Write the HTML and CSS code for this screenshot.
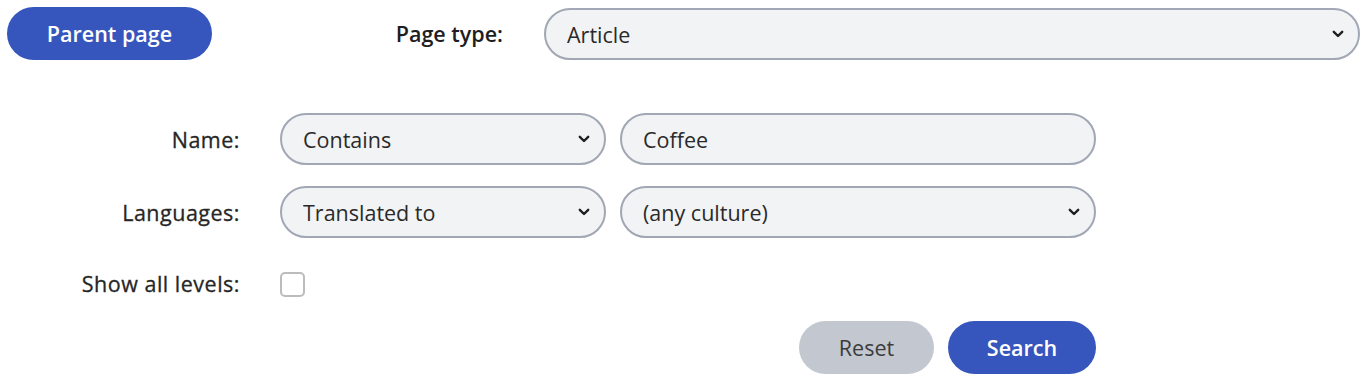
FILE: index.html
```html
<!DOCTYPE html>
<html lang="en">
<head>
<meta charset="utf-8">
<title>Search</title>
<link rel="stylesheet" href="styles.css">
</head>
<body>
<div class="page">
  <div class="top-row">
    <button class="btn btn-primary btn-parent" type="button">Parent page</button>
    <label class="top-label" for="ptype">Page type:</label>
    <div class="select-wrap grow">
      <select id="ptype" class="field"><option>Article</option></select>
      <svg class="chev" viewBox="0 0 12 8" width="12" height="8"><path d="M1.8 1.8 L6 6 L10.2 1.8" fill="none" stroke="#1f1f1f" stroke-width="2.4" stroke-linecap="round" stroke-linejoin="round"/></svg>
    </div>
  </div>

  <div class="form-grid">
    <label class="row-label" for="nameop">Name:</label>
    <div class="select-wrap">
      <select id="nameop" class="field"><option>Contains</option></select>
      <svg class="chev" viewBox="0 0 12 8" width="12" height="8"><path d="M1.8 1.8 L6 6 L10.2 1.8" fill="none" stroke="#1f1f1f" stroke-width="2.4" stroke-linecap="round" stroke-linejoin="round"/></svg>
    </div>
    <input class="field" type="text" value="Coffee">

    <label class="row-label" for="langop">Languages:</label>
    <div class="select-wrap">
      <select id="langop" class="field"><option>Translated to</option></select>
      <svg class="chev" viewBox="0 0 12 8" width="12" height="8"><path d="M1.8 1.8 L6 6 L10.2 1.8" fill="none" stroke="#1f1f1f" stroke-width="2.4" stroke-linecap="round" stroke-linejoin="round"/></svg>
    </div>
    <div class="select-wrap">
      <select class="field"><option>(any culture)</option></select>
      <svg class="chev" viewBox="0 0 12 8" width="12" height="8"><path d="M1.8 1.8 L6 6 L10.2 1.8" fill="none" stroke="#1f1f1f" stroke-width="2.4" stroke-linecap="round" stroke-linejoin="round"/></svg>
    </div>

    <label class="row-label check-label" for="alllv">Show all levels:</label>
    <div class="check-cell"><input id="alllv" class="check" type="checkbox"></div>

    <div class="actions">
      <button class="btn btn-reset" type="button">Reset</button>
      <button class="btn btn-primary btn-search" type="button">Search</button>
    </div>
  </div>
</div>
</body>
</html>
```

FILE: styles.css
```css
* { box-sizing: border-box; }

html, body {
  margin: 0;
  padding: 0;
  background: #ffffff;
}

body {
  font-family: "Open Sans", "Noto Sans", "Liberation Sans", sans-serif;
  font-size: 21.5px;
  color: #222222;
}

.page {
  padding: 7px 8px 0 7px;
  width: 1368px;
}

.top-row {
  display: flex;
  align-items: center;
  height: 53px;
}

.btn {
  font-family: inherit;
  border: none;
  border-radius: 27px;
  height: 53px;
  font-size: 21.5px;
  cursor: pointer;
  padding: 0 0 1px 0;
}

.btn-primary {
  background: #3656be;
  color: #ffffff;
  font-weight: 600;
}

.btn-parent {
  width: 205px;
  flex: none;
}

.top-label {
  width: 292px;
  flex: none;
  text-align: right;
  font-weight: 600;
  color: #1e1e1e;
  padding-right: 1px;
  padding-bottom: 1px;
}

.select-wrap {
  position: relative;
}

.select-wrap.grow {
  flex: 1;
  margin-left: 40px;
  height: 52px;
}

.field {
  display: block;
  width: 100%;
  height: 52px;
  font-family: inherit;
  font-size: 21.5px;
  color: #2a2a2a;
  background: #f2f3f5;
  border: 2.5px solid #a1a7b4;
  border-radius: 26px;
  padding: 1px 40px 0 21px;
  margin: 0;
  -webkit-appearance: none;
  appearance: none;
  outline: none;
}

.chev {
  position: absolute;
  right: 16px;
  top: 22px;
  pointer-events: none;
}

.form-grid {
  display: grid;
  grid-template-columns: 266px 326px 476px;
  column-gap: 14px;
  row-gap: 21px;
  margin-top: 53px;
  margin-left: -7px;
}

.row-label {
  align-self: center;
  text-align: right;
  padding-right: 26px;
  font-weight: 500;
  color: #262626;
  letter-spacing: 0.5px;
  -webkit-text-stroke: 0.3px #262626;
}

.check-label {
  height: 52px;
  line-height: 52px;
  margin-top: -2px;
}

.check-cell {
  display: flex;
  align-items: center;
  height: 52px;
  grid-column: 2 / 4;
}

.check {
  -webkit-appearance: none;
  appearance: none;
  width: 25px;
  height: 25px;
  margin: 0;
  border: 2px solid #bcbcbc;
  border-radius: 5px;
  background: #ffffff;
  margin-top: -2px;
}

.actions {
  grid-column: 2 / 4;
  display: flex;
  justify-content: flex-end;
  gap: 14px;
  margin-top: -11px;
}

.btn-reset {
  width: 135px;
  background: #c3c7cf;
  color: #3c3c3c;
  font-weight: 500;
}

.btn-search {
  width: 148px;
}
```
